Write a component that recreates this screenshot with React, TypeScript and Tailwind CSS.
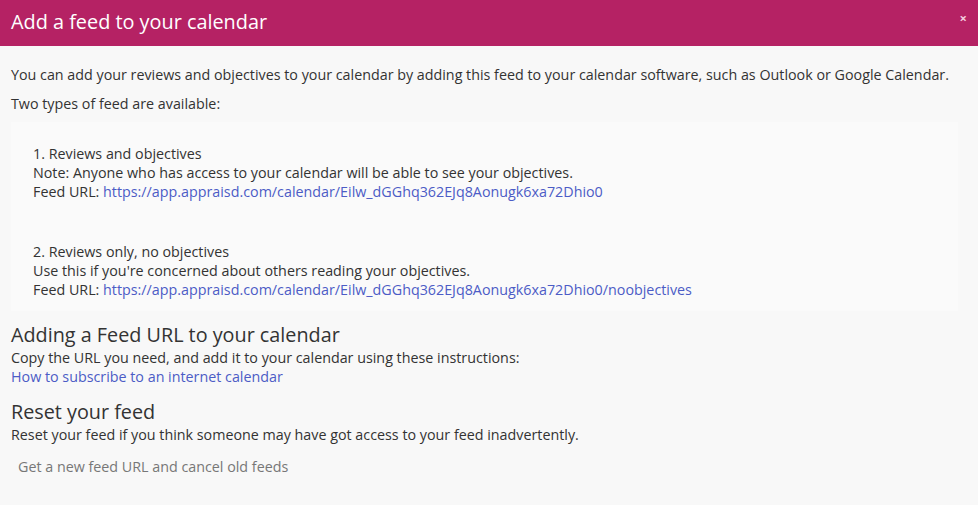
import React from "react";

const link = "text-[#4c5cc6]";

export default function App() {
  return (
    <div
      className="w-[978px] h-[505px] bg-[#f8f8f8] text-[#333333] text-[14.3px] leading-[19px] overflow-hidden"
      style={{ fontFamily: '"Open Sans", "Noto Sans", sans-serif' }}
    >
      <div className="h-[46px] bg-[#b52264] flex items-center justify-between pl-[11px] pr-[11px]">
        <h1 className="text-white text-[19.85px] leading-[24px] pb-[2px]">Add a feed to your calendar</h1>
        <span className="text-[#f3c9dc] text-[13px] font-bold leading-none pb-[10px]">×</span>
      </div>
      <div className="px-[11px] pt-[19px]">
        <p>
          You can add your reviews and objectives to your calendar by adding this feed to your calendar software, such as Outlook or Google Calendar.
        </p>
        <p className="mt-[10px]">Two types of feed are available:</p>
        <div className="mt-[9px] mr-[9px] bg-[#fafafa] pl-[22px] pt-[22px] pb-[12px]">
          <div>
            <div>1. Reviews and objectives</div>
            <div>Note: Anyone who has access to your calendar will be able to see your objectives.</div>
            <div>
              Feed URL: <a className={link}>https://app.appraisd.com/calendar/Eilw_dGGhq362EJq8Aonugk6xa72Dhio0</a>
            </div>
          </div>
          <div className="mt-[41px]">
            <div>2. Reviews only, no objectives</div>
            <div>Use this if you're concerned about others reading your objectives.</div>
            <div>
              Feed URL: <a className={link}>https://app.appraisd.com/calendar/Eilw_dGGhq362EJq8Aonugk6xa72Dhio0/noobjectives</a>
            </div>
          </div>
        </div>
        <h2 className="mt-[12px] text-[19.8px] leading-[24px]">Adding a Feed URL to your calendar</h2>
        <p className="mt-[1px]">Copy the URL you need, and add it to your calendar using these instructions:</p>
        <p>
          <a className={link}>How to subscribe to an internet calendar</a>
        </p>
        <h2 className="mt-[14px] text-[19.8px] leading-[24px]">Reset your feed</h2>
        <p className="mt-[1px]">Reset your feed if you think someone may have got access to your feed inadvertently.</p>
        <div className="mt-[13px] pl-[7px] text-[#777777]">Get a new feed URL and cancel old feeds</div>
      </div>
    </div>
  );
}
